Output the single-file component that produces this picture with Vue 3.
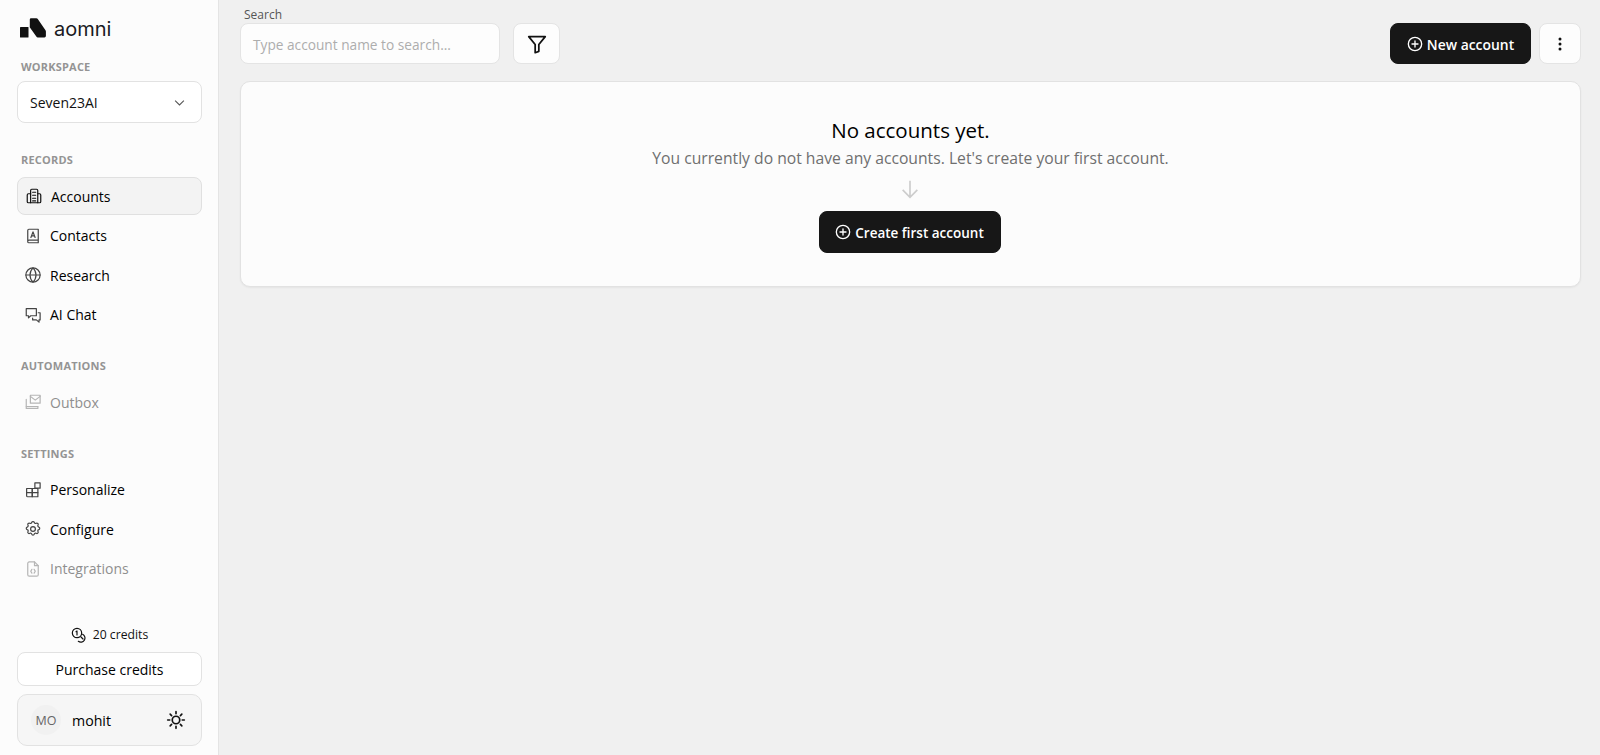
<script setup>
const sections = [
  { title: 'RECORDS', items: [
    { label: 'Accounts', icon: 'building', active: true },
    { label: 'Contacts', icon: 'contact' },
    { label: 'Research', icon: 'globe' },
    { label: 'AI Chat', icon: 'chat' },
  ]},
  { title: 'AUTOMATIONS', items: [{ label: 'Outbox', icon: 'outbox', disabled: true }]},
  { title: 'SETTINGS', items: [
    { label: 'Personalize', icon: 'blocks' },
    { label: 'Configure', icon: 'gear' },
    { label: 'Integrations', icon: 'file', disabled: true },
  ]},
]
const paths = {
  building: ['M7.500 21V4.500A1.500 1.500 0 0 1 9 3h6.500A1.500 1.500 0 0 1 17 4.500V21', 'M7.500 9H4.500A1.500 1.500 0 0 0 3 10.500v9A1.500 1.500 0 0 0 4.500 21h15a1.500 1.500 0 0 0 1.500-1.500v-9A1.500 1.500 0 0 0 19.500 9H17', 'M10.200 7h4M10.200 11h4M10.200 15h4M10.200 18.500h4'],
  contact: ['M5 19V4.500A1.500 1.500 0 0 1 6.500 3H19v18H6.500A1.500 1.500 0 0 1 5 19.500Zm0 0A1.500 1.500 0 0 1 6.500 17.500H19', 'M9.200 14l2.800-7.500 2.800 7.500M10.200 11.800h3.600'],
  globe: ['M12 2.500a9.500 9.500 0 1 0 0 19a9.500 9.500 0 0 0 0-19Z', 'M2.500 12h19', 'M12 2.500c2.600 2.600 4 5.900 4 9.500s-1.400 6.900-4 9.500c-2.600-2.600-4-5.900-4-9.500s1.400-6.900 4-9.500Z'],
  chat: ['M3 3.500h13.500v9.500H9l-3 2.800V13H3Z', 'M19 9h2.500v9.500H20v3l-3.500-3H11.500V16'],
  outbox: ['M8.500 3h13v10.500h-13Z', 'M8.500 4.500l6.500 5 6.500-5', 'M3 8.500v9.500h15.500', 'M3 18v2.500h15.500V18'],
  blocks: ['M3.500 10h7.500v11H5a1.500 1.500 0 0 1-1.500-1.500Z', 'M3.500 15.500h15', 'M11 10h7.500v11H11Z', 'M14.500 2.500h7v7h-7Z'],
  gear: ['M10.300 3.300c.4-1.600 3-1.600 3.400 0a1.700 1.700 0 0 0 2.600 1.100c1.500-.9 3.300.9 2.400 2.400a1.700 1.700 0 0 0 1.100 2.600c1.600.4 1.600 3 0 3.400a1.700 1.700 0 0 0-1.100 2.600c.9 1.500-.9 3.300-2.400 2.400a1.700 1.700 0 0 0-2.600 1.100c-.4 1.600-3 1.600-3.400 0a1.700 1.700 0 0 0-2.600-1.100c-1.500.9-3.300-.9-2.400-2.400a1.700 1.700 0 0 0-1.100-2.600c-1.600-.4-1.600-3 0-3.400a1.700 1.700 0 0 0 1.100-2.600c-.9-1.500.9-3.300 2.400-2.400a1.700 1.700 0 0 0 2.600-1.100Z', 'M12 8.800a3.200 3.200 0 1 0 0 6.400a3.200 3.200 0 0 0 0-6.400Z'],
  file: ['M14 2.500H7A2 2 0 0 0 5 4.500v15A2 2 0 0 0 7 21.500h10a2 2 0 0 0 2-2V7.500Z', 'M14 2.500v5h5', 'M10.500 12.500L9 15l1.500 2.500M13.500 12.500L15 15l-1.500 2.500'],
}
</script>

<template>
  <div class="page">
    <aside class="sidebar">
      <div class="logo">
        <svg width="27" height="20" viewBox="0 0 27 20" class="logo-mark">
          <rect x="0" y="9" width="8.500" height="10.500" rx="0.600" fill="#111" />
          <path d="M9.800 1.400A1.200 1.200 0 0 1 11 .2h5.400a1.500 1.500 0 0 1 1.200.6l7.900 11.500c.3.400.4.900.4 1.300v4.500a1.400 1.400 0 0 1-1.400 1.300h-6.800a1.500 1.500 0 0 1-1.200-.7L9.900 9.400a1.500 1.500 0 0 1-.1-1.200Z" fill="#111" />
        </svg>
        <span class="logo-text">aomni</span>
      </div>

      <div class="eyebrow workspace-label">WORKSPACE</div>
      <div class="select">
        <span>Seven23AI</span>
        <svg width="15" height="15" viewBox="0 0 24 24" fill="none" stroke="#555" stroke-width="1.700"><path d="M5 9l7 7 7-7" /></svg>
      </div>

      <nav class="nav">
        <section v-for="s in sections" :key="s.title" class="nav-section">
          <div class="eyebrow">{{ s.title }}</div>
          <div class="nav-items">
            <a v-for="item in s.items" :key="item.label" class="nav-item" :class="{ active: item.active, disabled: item.disabled }">
              <svg class="nav-icon" width="18" height="18" viewBox="0 0 24 24" fill="none" stroke="currentColor" stroke-width="1.600" stroke-linecap="round" stroke-linejoin="round">
                <path v-for="d in paths[item.icon]" :key="d" :d="d" />
              </svg>
              <span>{{ item.label }}</span>
            </a>
          </div>
        </section>
      </nav>

      <div class="sidebar-foot">
        <div class="credits">
          <svg width="16" height="16" viewBox="0 0 24 24" fill="none" stroke="#111" stroke-width="1.800" stroke-linecap="round">
            <circle cx="9" cy="9" r="7" />
            <path d="M9 6v6M7.500 7l1.500-1" />
            <path d="M17.500 11a6.200 6.200 0 1 1-6.500 10.500M15 15l3 3" />
          </svg>
          <span>20 credits</span>
        </div>
        <button class="purchase">Purchase credits</button>
        <div class="user">
          <div class="avatar">MO</div>
          <span class="user-name">mohit</span>
          <svg width="20" height="20" viewBox="0 0 24 24" fill="none" stroke="#111" stroke-width="2" stroke-linecap="round">
            <circle cx="12" cy="12" r="4.500" />
            <path d="M12 2v2.500M12 19.500V22M2 12h2.500M19.500 12H22M5 5l1.700 1.700M17.300 17.300 19 19M5 19l1.700-1.700M17.300 6.700 19 5" />
          </svg>
        </div>
      </div>
    </aside>

    <main class="main">
      <header class="toolbar">
        <div class="search">
          <label class="search-label">Search</label>
          <div class="search-row">
            <div class="search-input">Type account name to search...</div>
            <button class="icon-btn filter">
              <svg width="22" height="22" viewBox="0 0 24 24" fill="none" stroke="#111" stroke-width="1.900" stroke-linejoin="round"><path d="M3 4h18l-7 8.500V20l-4 1.500v-9Z" /></svg>
            </button>
          </div>
        </div>
        <div class="actions">
          <button class="primary new">
            <svg width="16" height="16" viewBox="0 0 24 24" fill="none" stroke="#fff" stroke-width="2" stroke-linecap="round"><circle cx="12" cy="12" r="10" /><path d="M12 7.500v9M7.500 12h9" /></svg>
            <span>New account</span>
          </button>
          <button class="icon-btn dots">
            <svg width="16" height="16" viewBox="0 0 16 16" fill="#111"><circle cx="8" cy="3" r="1.500" /><circle cx="8" cy="8" r="1.500" /><circle cx="8" cy="13" r="1.500" /></svg>
          </button>
        </div>
      </header>

      <section class="card">
        <h2 class="card-title">No accounts yet.</h2>
        <p class="card-sub">You currently do not have any accounts. Let's create your first account.</p>
        <svg class="arrow" width="22" height="22" viewBox="0 0 24 24" fill="none" stroke="#ccc" stroke-width="1.800"><path d="M12 3v18M4 13l8 8 8-8" /></svg>
        <button class="primary create">
          <svg width="16" height="16" viewBox="0 0 24 24" fill="none" stroke="#fff" stroke-width="2" stroke-linecap="round"><circle cx="12" cy="12" r="10" /><path d="M12 7.500v9M7.500 12h9" /></svg>
          <span>Create first account</span>
        </button>
      </section>
    </main>
  </div>
</template>

<style>
html, body { margin: 0; background: #f0f0f0; }
</style>

<style scoped>
.page {
  display: flex;
  height: 755px;
  overflow: hidden;
  background: #f0f0f0;
  font-family: "Open Sans", "Noto Sans", sans-serif;
  color: #111;
}
button { font-family: inherit; cursor: pointer; }

.sidebar {
  width: 219px;
  box-sizing: border-box;
  padding: 17px 16px 9px 17px;
  background: #fcfcfc;
  border-right: 1px solid #e4e4e4;
  display: flex;
  flex-direction: column;
  flex-shrink: 0;
}
.logo { display: flex; align-items: center; gap: 7px; height: 22px; padding-left: 3px; }
.logo-text { font-size: 20px; font-family: Inter, sans-serif; color: #1a1a22; line-height: 24px; padding-top: 2px; }
.eyebrow { font-size: 11px; font-weight: 700; color: #949494; line-height: 15px; padding-left: 4px; letter-spacing: 0.2px; }
.workspace-label { margin-top: 20px; }
.select {
  margin-top: 7px;
  height: 42px;
  box-sizing: border-box;
  border: 1px solid #e2e2e2;
  border-radius: 8px;
  background: #fff;
  display: flex;
  align-items: center;
  justify-content: space-between;
  padding: 0 14px 0 12px;
  font-size: 14px;
}
.nav { margin-top: 29px; display: flex; flex-direction: column; gap: 24.500px; }
.nav-items { margin-top: 10px; display: flex; flex-direction: column; gap: 1.500px; }
.nav-item {
  height: 38px;
  box-sizing: border-box;
  display: flex;
  align-items: center;
  gap: 8px;
  padding: 0 6px;
  font-size: 14px;
  font-weight: 500;
  border: 1px solid transparent;
  border-radius: 8px;
  color: #000;
}
.nav-item.active { background: #f3f3f3; border-color: #e0e0e0; padding-left: 7px; }
.nav-item.disabled { color: #8f8f8f; }
.nav-icon { color: #444; flex-shrink: 0; }
.nav-item.active .nav-icon { color: #111; }
.nav-item.disabled .nav-icon { color: #b5b5b5; }

.sidebar-foot { margin-top: auto; display: flex; flex-direction: column; }
.credits { display: flex; align-items: center; justify-content: center; gap: 6px; font-size: 12.200px; line-height: 18px; margin-bottom: 8px; }
.purchase {
  height: 34px;
  background: #fff;
  border: 1px solid #e2e2e2;
  border-radius: 8px;
  font-size: 14px;
  font-weight: 500;
  color: #000;
  padding: 0;
}
.user {
  margin-top: 8px;
  height: 52px;
  box-sizing: border-box;
  background: #f6f6f6;
  border: 1px solid #e2e2e2;
  border-radius: 10px;
  display: flex;
  align-items: center;
  padding: 0 15px 0 13px;
}
.avatar {
  width: 30px; height: 30px; border-radius: 50%;
  background: #f1f1f1; color: #666; font-size: 12.500px;
  display: flex; align-items: center; justify-content: center;
}
.user-name { margin-left: 11px; font-size: 14.200px; font-weight: 500; flex: 1; color: #000; }

.main { flex: 1; min-width: 0; padding: 0 19px 0 21px; }
.toolbar { display: flex; justify-content: space-between; align-items: flex-end; height: 64px; }
.search-label { display: block; font-size: 12px; color: #555; line-height: 16px; margin: 7px 0 0 4px; }
.search-row { display: flex; gap: 13px; }
.search-input {
  width: 260px; height: 41px; box-sizing: border-box;
  background: #fdfdfd; border: 1px solid #e4e4e4; border-radius: 8px;
  padding: 2px 12px 0; display: flex; align-items: center;
  font-size: 13.700px; color: #adadad;
}
.icon-btn {
  background: #fdfdfd; border: 1px solid #e4e4e4; border-radius: 8px;
  display: flex; align-items: center; justify-content: center; padding: 0;
}
.filter { width: 47px; height: 41px; }
.dots { width: 42px; height: 41px; }
.actions { display: flex; gap: 8px; align-items: flex-end; }
.primary {
  background: #171717; color: #fff; border: 1px solid #171717; border-radius: 8px;
  display: flex; align-items: center; justify-content: center; gap: 4px;
  font-weight: 600; padding: 0;
}
.primary span { padding-top: 2px; }
.new { width: 141px; height: 41px; font-size: 13.900px; }
.create { width: 182px; height: 42px; font-size: 13.500px; margin: 11px 2px 0 0; }

.card {
  margin-top: 17px;
  height: 206px;
  box-sizing: border-box;
  background: #fcfcfc;
  border: 1px solid #e2e2e2;
  border-radius: 10px;
  box-shadow: 0 1px 2px rgba(0,0,0,.05);
  display: flex; flex-direction: column; align-items: center;
  padding-top: 35px;
}
.card-title { margin: 0; font-size: 20.500px; font-weight: 500; line-height: 27px; color: #000; }
.card-sub { margin: 2px 0 0; font-size: 15.700px; line-height: 25px; color: #6f6f6f; }
.arrow { margin: 7px 1px 0 0; }
</style>
